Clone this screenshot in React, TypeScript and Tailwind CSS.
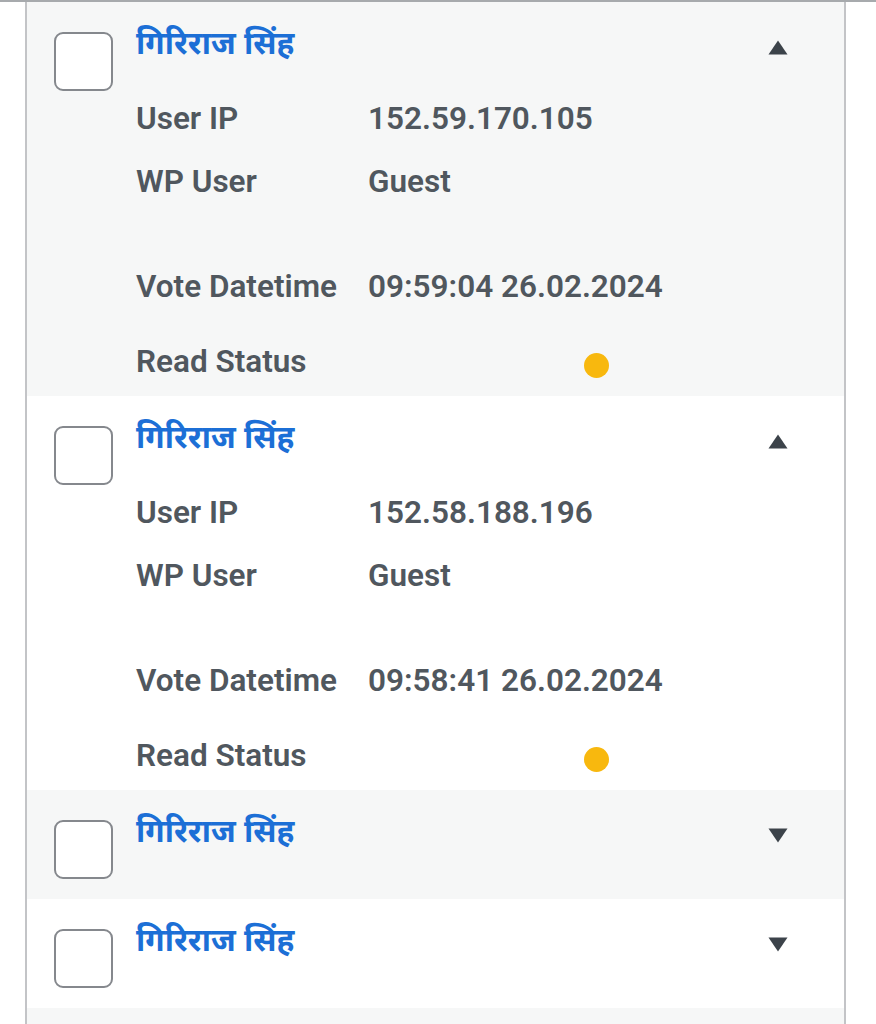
import React from "react";

type Vote = {
  name: string;
  ip?: string;
  user?: string;
  datetime?: string;
  open: boolean;
};

const votes: Vote[] = [
  { name: "गिरिराज सिंह", ip: "152.59.170.105", user: "Guest", datetime: "09:59:04 26.02.2024", open: true },
  { name: "गिरिराज सिंह", ip: "152.58.188.196", user: "Guest", datetime: "09:58:41 26.02.2024", open: true },
  { name: "गिरिराज सिंह", open: false },
  { name: "गिरिराज सिंह", open: false },
];

const labelFont = { fontFamily: "Roboto, 'Noto Sans', sans-serif" };

function Triangle({ up }: { up: boolean }) {
  return (
    <svg width="20" height="15" viewBox="0 0 20 15" className="shrink-0">
      {up ? (
        <path d="M10 0.5 L19.5 14.5 L0.5 14.5 Z" fill="#3c434a" />
      ) : (
        <path d="M0.5 0.5 L19.5 0.5 L10 14.5 Z" fill="#3c434a" />
      )}
    </svg>
  );
}

function Field({ label, children, className = "" }: { label: string; children: React.ReactNode; className?: string }) {
  return (
    <div className={"flex h-[36px] items-center text-[31.5px] leading-[36px] font-semibold text-[#50575e] " + className}>
      <div className="w-[232px] shrink-0">{label}</div>
      <div className="flex-1">{children}</div>
    </div>
  );
}

function VoteRow({ vote, shaded }: { vote: Vote; shaded: boolean }) {
  return (
    <div className={"flex " + (shaded ? "bg-[#f6f7f7]" : "bg-white")}>
      <div className="pl-[27px] pr-[23px] pt-[30px] shrink-0">
        <div className="w-[59px] h-[59px] rounded-[9px] border-2 border-[#85888d] bg-white" />
      </div>
      <div className={"flex-1 pr-[56px] " + (vote.open ? "pb-[16px]" : "pb-[39px]")} style={labelFont}>
        <div className="mt-[20px] h-[50px] flex items-center justify-between">
          <span
            className="text-[31.5px] font-bold text-[#1c6fd6] leading-[50px]"
            style={{ fontFamily: "'Noto Sans Devanagari', 'Noto Sans', 'Lohit Devanagari', sans-serif" }}
          >
            {vote.name}
          </span>
          <Triangle up={vote.open} />
        </div>
        {vote.open && (
          <>
            <Field label="User IP" className="mt-[29px]">{vote.ip}</Field>
            <Field label="WP User" className="mt-[27px]">{vote.user}</Field>
            <Field label="Vote Datetime" className="mt-[69px]">{vote.datetime}</Field>
            <Field label="Read Status" className="mt-[39px]">
              <div className="ml-[216px] mt-[6px] w-[25px] h-[25px] rounded-full bg-[#f8b80e]" />
            </Field>
          </>
        )}
      </div>
    </div>
  );
}

export default function App() {
  return (
    <div className="w-[876px] h-[1024px] bg-white overflow-hidden">
      <div className="h-[2px] bg-[#a7aaad]" />
      <div className="ml-[25px] w-[821px] border-x-2 border-[#c3c4c7] h-[1022px] bg-[#f6f7f7]">
        {votes.map((v, i) => (
          <VoteRow key={i} vote={v} shaded={i % 2 === 0} />
        ))}
      </div>
    </div>
  );
}
